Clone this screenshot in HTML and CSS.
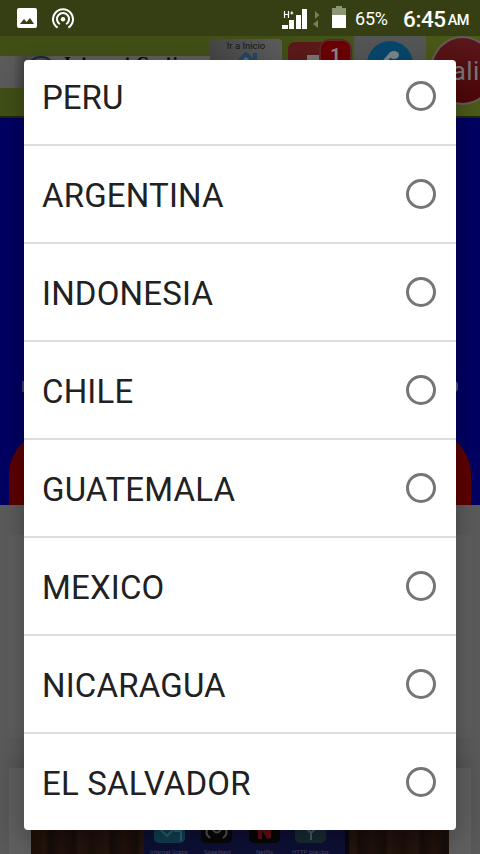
FILE: index.html
```
<!DOCTYPE html>
<html lang="es">
<head>
<meta charset="utf-8">
<meta name="viewport" content="width=device-width">
<title>Internet Gratis</title>
<link rel="stylesheet" href="styles.css">
</head>
<body>
<div class="screen">
  <header class="status">
    <svg class="s-image" width="20" height="20" viewBox="0 0 20 20"><path fill="#fff" fill-rule="evenodd" d="M2 0h16a2 2 0 0 1 2 2v16a2 2 0 0 1-2 2H2a2 2 0 0 1-2-2V2a2 2 0 0 1 2-2zM3 16h14l-4-6-3.5 4L7 11z"/></svg>
    <svg class="s-cast" width="22" height="21" viewBox="0 0 22 21" fill="none" stroke="#fff" stroke-width="2"><path d="M5.6 19.700A10 10 0 1 1 16.400 19.700M7.800 16.200A6 6 0 1 1 14.200 16.200"/><circle cx="11" cy="11.300" r="2.200" fill="#fff" stroke="none"/></svg>
    <svg class="s-signal" width="38" height="20" viewBox="0 0 38 20"><path fill="#fff" d="M0 16h6v4H0zM7 11h5v9H7zM14 6h5v14h-5zM20 0h5v20h-5z"/><path d="M2.500 2v7M6.500 2v7M2.500 5.500h4M8.300 4h3M9.800 2.500v3" fill="none" stroke="#fff" stroke-width="1.200"/><path fill="#75805d" d="M33 2l4.500 4-4.500 4zM36 11v8l-5-4z"/></svg>
    <svg class="s-battery" width="14" height="22" viewBox="0 0 14 22"><path fill="#8b9676" d="M4 0h6v2h4v7H0V2h4z"/><path fill="#fff" d="M0 9h14v13H0z"/></svg>
    <span class="percent">65%</span>
    <span class="clock">6:45</span><span class="ampm">AM</span>
  </header>
  <div class="toolbar">
    <div class="brand"><svg class="globe" width="30" height="30" viewBox="0 0 30 30"><circle cx="15" cy="15" r="14" fill="#465068" stroke="#1d2637" stroke-width="2"/></svg><b>Internet Gratis</b></div>
    <div class="home"><span>Ir a Inicio</span><svg width="44" height="30" viewBox="0 0 44 30"><path d="M8 17L22 3l14 14" fill="none" stroke="#254566" stroke-width="4"/><path d="M12 15L22 6l10 9v15H12z" fill="#596673"/><path d="M29 2h4v9h-4z" fill="#254566"/></svg></div>
    <div class="notice"><i></i><span class="badge">1</span></div>
    <div class="social"><svg width="50" height="50" viewBox="0 0 50 50"><circle cx="25" cy="24" r="23" fill="#07466b"/><path d="M19 22l8-9" stroke="#7c8589" stroke-width="4"/><ellipse cx="29" cy="15" rx="5" ry="4" fill="#7c8589"/></svg></div>
    <div class="exit">Salir</div>
  </div>
  <section class="hero"><div class="hero-text"><span></span><span></span></div><div class="hero-panel"></div></section>
  <main class="content">
    <div class="card"></div>
    <div class="photo-card">
      <svg width="418" height="86" viewBox="0 0 418 86"><defs><linearGradient id="wood" x2="31" gradientUnits="userSpaceOnUse" spreadMethod="reflect"><stop stop-color="#1c0f0a"/><stop offset=".45" stop-color="#25150d"/><stop offset=".6" stop-color="#170c08"/><stop offset="1" stop-color="#22120b"/></linearGradient></defs>
      <path fill="url(#wood)" d="M0 0h418v86H0z"/><path fill="#0d1035" d="M113 0h204v86H113z"/><path fill="#090812" d="M314 0h4v86h-4z"/>
      <g><rect x="123" y="41" width="31" height="34" rx="5" fill="#123f52"/><path d="M129 61l7 7 10-10M143 63h7v10" fill="none" stroke="#2b6274" stroke-width="2"/><rect x="170" y="41" width="31" height="34" rx="5" fill="#08080a"/><path d="M177 60q-4 6 2 10M194 60q4 6-2 10M182 62q4 5 8 0" fill="none" stroke="#55555a" stroke-width="2"/><rect x="218" y="41" width="31" height="34" rx="5" fill="#080607"/><path d="M229 71V56l9 14V56" fill="none" stroke="#680c14" stroke-width="4" stroke-linejoin="bevel"/><rect x="264" y="41" width="31" height="34" rx="5" fill="#172b32"/><path d="M275 60l5 5 5-5M280 64v8" fill="none" stroke="#455d63" stroke-width="2"/></g>
      <g class="app-names"><text x="119" y="86">Internet Gratis</text><text x="173" y="86">Speedtest</text><text x="225" y="86">Netflix</text><text x="261" y="86">HTTP Injector</text></g></svg>
    </div>
  </main>
  <div class="dialog" role="radiogroup">
    <label class="row first">PERU<i class="radio"></i></label>
    <label class="row">ARGENTINA<i class="radio"></i></label>
    <label class="row">INDONESIA<i class="radio"></i></label>
    <label class="row">CHILE<i class="radio"></i></label>
    <label class="row">GUATEMALA<i class="radio"></i></label>
    <label class="row">MEXICO<i class="radio"></i></label>
    <label class="row">NICARAGUA<i class="radio"></i></label>
    <label class="row last">EL SALVADOR<i class="radio"></i></label>
  </div>
</div>
</body>
</html>
```
FILE: styles.css
```
* { box-sizing: border-box; }
body { margin: 0; font-family: Roboto, sans-serif; }
svg { display: block; flex: none; }
.screen { position: relative; width: 480px; height: 854px; overflow: hidden; background: #5d5d5d; }
.status { display: flex; align-items: center; height: 36px; padding: 0 11px 0 17px; background: #353f13; color: #fff; white-space: nowrap; }
.s-cast { margin-left: 15px; }
.s-signal { margin-left: 208px; margin-top: 2px; }
.s-battery { margin-left: 12px; margin-top: -2px; }
.percent { width: 47px; margin-left: 9px; font-size: 18px; line-height: 36px; padding-top: 2px; letter-spacing: -.2px; }
.clock { font-size: 22.5px; font-weight: 500; line-height: 36px; padding: 2px 0 0 1px; letter-spacing: -.4px; }
.ampm { margin-left: auto; font-size: 14.5px; font-weight: 500; padding-top: 5px; letter-spacing: -.5px; }
.toolbar { display: flex; height: 82px; background: linear-gradient(90deg, #404f16 0 282px, #4b5a19 480px); border-bottom: 2px solid #20270d; overflow: hidden; }
.brand { display: flex; flex: none; width: 210px; height: 32px; margin-top: 20px; padding-left: 26px; background: linear-gradient(90deg, #5b5b5b 0 13px, #454545 24px, #5d5d5d 58px); overflow: hidden; font: bold 14.5px "DejaVu Serif", serif; color: #090909; }
.globe { margin-right: 8px; }
.brand b { line-height: 14px; white-space: nowrap; }
.home { flex: none; width: 72px; height: 72px; margin-top: 3px; background: linear-gradient(90deg, #454545, #5c5c5c); color: #151515; font-size: 9.5px; line-height: 13px; text-align: center; border-radius: 0 4px 0 0; }
.home svg { margin: -1px auto 0; }
.notice { position: relative; flex: none; width: 54px; height: 60px; margin: 6px 12px 0 6px; background: #5c1919; border-radius: 7px; }
.notice i { display: block; width: 14px; height: 8px; margin: 13px 0 0 19px; background: #777; }
.badge { position: absolute; left: 31px; top: -3px; width: 33px; height: 34px; border: 2px solid #612626; border-radius: 10px; background: #6b0004; color: #888; text-align: center; font: bold 19px/28px Roboto, sans-serif; }
.social { flex: none; width: 72px; height: 72px; padding: 4px 11px; background: #525553; }
.exit { display: flex; justify-content: center; flex: none; width: 65px; height: 69px; margin-left: 4px; border: 2px solid #625c5c; border-radius: 50%; background: linear-gradient(#5a171b, #4c0506); color: #777; font-size: 26px; line-height: 66px; letter-spacing: .5px; }
.hero { display: flex; flex-direction: column; justify-content: space-between; height: 387px; background: #000062; }
.hero-text { display: flex; justify-content: space-between; padding: 263px 22px 0; }
.hero-text span { width: 4px; height: 11px; border: 2px solid #54547a; border-radius: 0 4px 4px 0; }
.hero-text span:first-child { width: 3px; border-radius: 0; border-color: #3c3c6e; }
.hero-panel { width: 462px; height: 75px; margin: 0 9px; background: #5c0000; border-radius: 45px 45px 0 0; }
.content { padding: 30px 9px 0; background: #5b5b5b; height: 349px; }
.card { height: 203px; background: #5f5f5f; border-radius: 3px; }
.photo-card { margin-top: 30px; padding: 0 22px; background: #5f5f5f; height: 86px; box-shadow: 0 -9px 20px #525252; }
.app-names { fill: #44445f; font: 6px Roboto, sans-serif; }
.dialog { position: absolute; left: 24px; top: 60px; width: 432px; height: 770px; border-radius: 4px; background: #fff; overflow: hidden; box-shadow: 0 10px 26px rgba(0,0,0,.3); }
.row { display: flex; align-items: center; justify-content: space-between; height: 98px; padding: 3px 20px 0 18px; border-bottom: 2px solid #ddd; color: #212121; font-size: 33px; line-height: 40px; letter-spacing: .17px; }
.row.first { height: 86px; padding: 0 20px 9px 18px; letter-spacing: 0; }
.row.last { height: 96px; border-bottom: 0; }
.radio { width: 30px; height: 30px; margin-top: -3px; border: 3px solid #757575; border-radius: 50%; }
```
